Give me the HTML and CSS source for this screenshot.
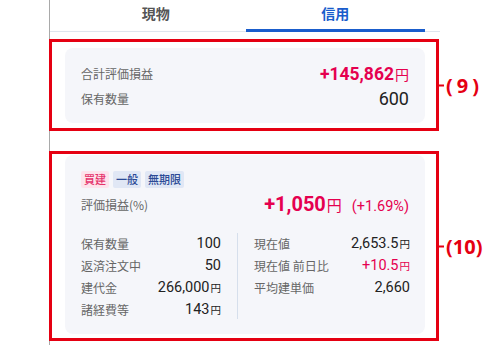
FILE: index.html
```html
<!DOCTYPE html>
<html lang="ja">
<head>
<meta charset="utf-8">
<link rel="stylesheet" href="styles.css">
</head>
<body>
<div class="screen">
  <div class="tabs">
    <div class="tab">現物</div>
    <div class="tab active">信用</div>
  </div>

  <div class="annot annot-9">
    <div class="card summary">
      <div class="row">
        <span class="label">合計評価損益</span>
        <span class="val big pos">+145,862<span class="yen">円</span></span>
      </div>
      <div class="row">
        <span class="label">保有数量</span>
        <span class="val big">600</span>
      </div>
    </div>
    <div class="tag-note"><span class="dash"></span>(<span class="num9">9</span>)</div>
  </div>

  <div class="annot annot-10">
    <div class="card detail">
      <div class="tags">
        <span class="tag buy">買建</span>
        <span class="tag gen">一般</span>
        <span class="tag gen">無期限</span>
      </div>
      <div class="row pl">
        <span class="label">評価損益(%)</span>
        <span class="val pos"><span class="huge">+1,050</span><span class="yen-l">円</span><span class="pct">(+1.69%)</span></span>
      </div>
      <div class="grid">
        <div class="col">
          <div class="gr"><span class="label">保有数量</span><span class="gv">100</span></div>
          <div class="gr"><span class="label">返済注文中</span><span class="gv">50</span></div>
          <div class="gr"><span class="label">建代金</span><span class="gv">266,000<span class="yen-s">円</span></span></div>
          <div class="gr"><span class="label">諸経費等</span><span class="gv">143<span class="yen-s">円</span></span></div>
        </div>
        <div class="divider"></div>
        <div class="col">
          <div class="gr"><span class="label">現在値</span><span class="gv">2,653.5<span class="yen-s">円</span></span></div>
          <div class="gr"><span class="label">現在値 前日比</span><span class="gv pos">+10.5<span class="yen-s">円</span></span></div>
          <div class="gr"><span class="label">平均建単価</span><span class="gv">2,660</span></div>
        </div>
      </div>
    </div>
    <div class="tag-note"><span class="dash"></span>(10)</div>
  </div>
</div>
</body>
</html>
```

FILE: styles.css
```css
html, body {
  margin: 0;
  padding: 0;
  background: #fff;
}
body {
  font-family: Roboto, "Noto Sans CJK JP", sans-serif;
  color: #222;
  width: 487px;
  height: 345px;
  overflow: hidden;
}
.screen {
  margin-left: 49px;
  width: 390px;
  height: 345px;
  border-left: 1px solid #a9a9a9;
}
.tabs {
  display: flex;
  height: 32px;
  padding: 0 15px 0 16px;
  box-shadow: inset 0 -1px 0 #dfe5ee;
}
.tab {
  flex: 1;
  text-align: center;
  font-family: "Noto Sans CJK JP", sans-serif;
  font-weight: 700;
  font-size: 14px;
  line-height: 26px;
  color: #555;
}
.tab.active {
  color: #1a5dcc;
  box-shadow: inset 0 -3px 0 #1a5dcc;
}
.annot {
  position: relative;
  margin-left: -1px;
  border: 3px solid #e50012;
  padding: 6px 11px 5px 13px;
  box-sizing: border-box;
  width: 390px;
}
.annot-9 { margin-top: 7px; }
.annot-10 { margin-top: 20px; padding-top: 1px; padding-bottom: 4px; }
.card {
  background: #f5f6fa;
  border-radius: 8px;
}
.summary {
  padding: 13px 16px 12px;
}
.row {
  display: flex;
  justify-content: space-between;
  align-items: center;
  height: 25px;
}
.label {
  font-family: "Noto Sans CJK JP", sans-serif;
  font-size: 12px;
  color: #666;
}
.val {
  white-space: nowrap;
}
.big {
  font-size: 18px;
}
.summary .pos {
  font-weight: 700;
  font-size: 17.5px;
}
.pos { color: #e5004f; }
.yen {
  font-family: "Noto Sans CJK JP", sans-serif;
  font-size: 14px;
  font-weight: 400;
  margin-left: 1px;
}
.detail {
  padding: 16px 16px 14px;
}
.tags {
  display: flex;
  gap: 4px;
  height: 17px;
}
.tag {
  font-family: "Noto Sans CJK JP", sans-serif;
  font-size: 11px;
  font-weight: 500;
  line-height: 17px;
  padding: 0 3px;
  border-radius: 2px;
}
.tag.buy { background: #fde3ec; color: #e5336b; }
.tag.gen { background: #e0e7f5; color: #2b4a96; }
.row.pl {
  margin-top: 3px;
  height: 26px;
}
.huge {
  font-size: 20px;
  font-weight: 700;
}
.yen-l {
  font-family: "Noto Sans CJK JP", sans-serif;
  font-size: 15px;
  margin-left: 1px;
}
.pct {
  font-size: 14.5px;
  margin-left: 10px;
}
.grid {
  display: grid;
  grid-template-columns: 140px 1px 156px;
  column-gap: 16px;
  margin-top: 15px;
}
.gr {
  display: flex;
  justify-content: space-between;
  align-items: center;
  height: 22px;
}
.gv {
  font-size: 14.5px;
  white-space: nowrap;
}
.yen-s {
  font-family: "Noto Sans CJK JP", sans-serif;
  font-size: 10.5px;
  margin-left: 1px;
}
.divider {
  background: #d6dfec;
  margin: 1px 0 1px;
}
.tag-note {
  position: absolute;
  left: 100%;
  top: 50%;
  transform: translateY(-50%);
  display: flex;
  align-items: center;
  color: #e50012;
  font-family: "Noto Sans", sans-serif;
  font-weight: 700;
  font-size: 20px;
  white-space: nowrap;
}
.dash {
  display: inline-block;
  width: 8px;
  height: 2px;
  background: #e50012;
  margin-right: 2px;
}
.num9 {
  margin: 0 4px;
}
```
